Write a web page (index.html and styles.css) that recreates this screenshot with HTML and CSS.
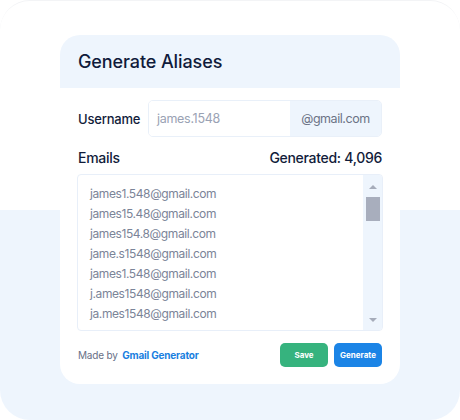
FILE: index.html
```html
<!DOCTYPE html>
<html>
<head>
<meta charset="utf-8">
<link rel="stylesheet" href="styles.css">
</head>
<body>
<div class="page">
  <div class="card">
    <div class="card-head">Generate Aliases</div>
    <div class="card-body">
      <div class="user-row">
        <span class="label">Username</span>
        <div class="input-group">
          <span class="input">james.1548</span>
          <span class="suffix">@gmail.com</span>
        </div>
      </div>
      <div class="emails-row">
        <span class="label-lg">Emails</span>
        <span class="label-lg">Generated: 4,096</span>
      </div>
      <div class="list-box">
        <ul class="list">
          <li>james1.548@gmail.com</li>
          <li>james15.48@gmail.com</li>
          <li>james154.8@gmail.com</li>
          <li>jame.s1548@gmail.com</li>
          <li>james1.548@gmail.com</li>
          <li>j.ames1548@gmail.com</li>
          <li>ja.mes1548@gmail.com</li>
        </ul>
        <div class="scrollbar">
          <span class="arrow up"></span>
          <span class="thumb"></span>
          <span class="track"></span>
          <span class="arrow down"></span>
        </div>
      </div>
      <div class="footer">
        <span class="made">Made by <a class="brand">Gmail Generator</a></span>
        <div class="buttons">
          <button class="btn save">Save</button>
          <button class="btn gen">Generate</button>
        </div>
      </div>
    </div>
  </div>
</div>
</body>
</html>
```
FILE: styles.css
```css
* { box-sizing: border-box; }
html, body { margin: 0; padding: 0; }
body {
  font-family: Inter, "Noto Sans", sans-serif;
  color: #111c3a;
}
.page {
  width: 460px;
  height: 420px;
  overflow: hidden;
  border-radius: 30px;
  border-top: 1px solid #f3f4f6;
  background: linear-gradient(#ffffff 209px, #eef5fd 209px);
  padding-top: 34px;
}
.card {
  margin-left: 60px;
  width: 340px;
  background: #ffffff;
  border-radius: 20px;
  overflow: hidden;
}
.card-head {
  height: 53px;
  background: #eef5fd;
  padding-left: 18px;
  display: flex;
  align-items: center;
  font-size: 18px;
  font-weight: 500;
  letter-spacing: -0.1px;
  color: #101b3b;
}
.card-body {
  padding: 12px 18px 17px 18px;
}
.user-row {
  display: flex;
  align-items: center;
}
.label {
  width: 70px;
  font-size: 13px;
  font-weight: 500;
  letter-spacing: -0.2px;
  color: #111c3a;
}
.input-group {
  flex: 1;
  height: 37px;
  display: flex;
  border: 1px solid #e9f0f9;
  border-radius: 5px;
  overflow: hidden;
}
.input {
  flex: 1;
  display: flex;
  align-items: center;
  padding-left: 8px;
  font-size: 12.5px;
  letter-spacing: -0.3px;
  color: #9aa2b4;
  background: #fff;
}
.suffix {
  width: 91px;
  display: flex;
  align-items: center;
  justify-content: center;
  background: #eef5fd;
  font-size: 12.5px;
  letter-spacing: -0.45px;
  color: #6b7385;
}
.emails-row {
  display: flex;
  justify-content: space-between;
  align-items: center;
  height: 20px;
  margin-top: 10px;
}
.label-lg {
  font-size: 14px;
  font-weight: 500;
  letter-spacing: -0.3px;
  color: #111c3a;
}
.list-box {
  margin: 7px -1px 0 -1px;
  height: 157px;
  border: 1px solid #e8eff9;
  border-radius: 4px;
  display: flex;
  overflow: hidden;
}
.list {
  flex: 1;
  list-style: none;
  margin: 0;
  padding: 9px 0 0 12px;
}
.list li {
  font-size: 12px;
  letter-spacing: -0.4px;
  line-height: 20px;
  color: #7b8498;
}
.scrollbar {
  width: 19px;
  background: #eef5fd;
  display: flex;
  flex-direction: column;
  align-items: center;
  padding: 10px 0 8px 0;
}
.arrow {
  width: 0;
  height: 0;
  border-left: 4px solid transparent;
  border-right: 4px solid transparent;
}
.arrow.up { border-bottom: 4px solid #a6acba; }
.arrow.down { border-top: 4px solid #a6acba; }
.thumb {
  margin-top: 8px;
  width: 14px;
  height: 24px;
  background: #a8aebd;
}
.track { flex: 1; }
.footer {
  margin-top: 12px;
  display: flex;
  justify-content: space-between;
  align-items: center;
}
.made {
  font-size: 10px;
  letter-spacing: -0.2px;
  color: #687086;
}
.brand {
  margin-left: 2px;
  color: #1a7fe0;
  font-weight: 700;
  font-size: 10px;
  letter-spacing: -0.2px;
}
.buttons {
  display: flex;
  gap: 6px;
}
.btn {
  width: 48px;
  height: 24px;
  border: none;
  border-radius: 5px;
  color: #fff;
  font-family: Inter, "Noto Sans", sans-serif;
  font-size: 8px;
  font-weight: 700;
  padding: 0;
}
.btn.save { background: #36b37e; }
.btn.gen { background: #1b84e6; }
```
